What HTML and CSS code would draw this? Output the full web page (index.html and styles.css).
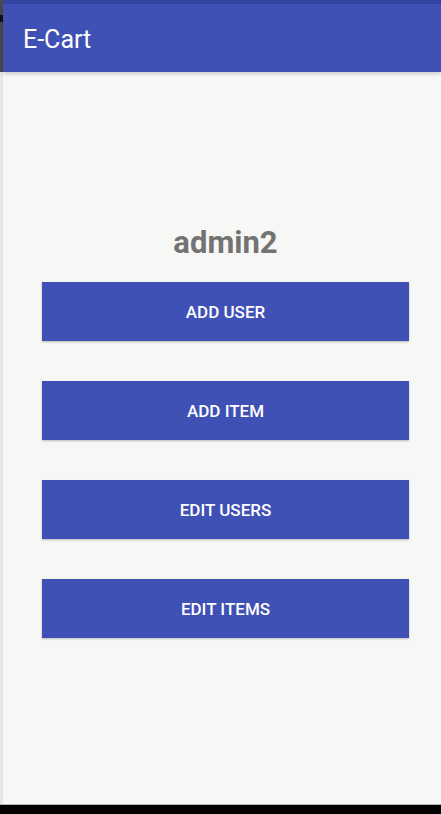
FILE: index.html
```html
<!DOCTYPE html>
<html>
<head>
<meta charset="utf-8">
<link rel="stylesheet" href="styles.css">
</head>
<body>
<div class="frame">
  <div class="edge">
    <div class="edge-top"><span class="edge-mark"></span></div>
    <div class="edge-bottom"></div>
  </div>
  <div class="main">
    <div class="status"></div>
    <header class="appbar"><span class="title">E-Cart</span></header>
    <section class="content">
      <h1 class="user">admin2</h1>
      <div class="buttons">
        <button class="btn">ADD USER</button>
        <button class="btn">ADD ITEM</button>
        <button class="btn">EDIT USERS</button>
        <button class="btn">EDIT ITEMS</button>
      </div>
    </section>
  </div>
</div>
<div class="navbar"></div>
</body>
</html>
```

FILE: styles.css
```css
html, body {
  margin: 0;
  padding: 0;
}
body {
  width: 441px;
  height: 814px;
  overflow: hidden;
  background: #f7f8f6;
  font-family: Roboto, "Liberation Sans", sans-serif;
  display: flex;
  flex-direction: column;
}
.frame {
  flex: 1;
  display: flex;
  min-height: 0;
}
.edge {
  width: 3px;
  display: flex;
  flex-direction: column;
}
.edge-top {
  height: 72px;
  background: #4a4a4a;
  padding-top: 15px;
  box-sizing: border-box;
}
.edge-mark {
  display: block;
  height: 7px;
  background: #111;
}
.edge-bottom {
  flex: 1;
  background: #e6e6e6;
}
.main {
  flex: 1;
  display: flex;
  flex-direction: column;
}
.status {
  height: 4px;
  background: #3444a3;
}
.appbar {
  height: 68px;
  background: #3f51b5;
  display: flex;
  align-items: center;
  padding-left: 20px;
  box-shadow: 0 2px 4px rgba(0, 0, 0, 0.18);
  position: relative;
  z-index: 1;
}
.title {
  color: #ffffff;
  font-size: 25px;
  font-weight: 400;
  margin-top: 2px;
}
.content {
  flex: 1;
  padding: 0 32px 0 39px;
  display: flex;
  flex-direction: column;
}
.user {
  margin: 154px 0 22px;
  font-size: 31px;
  line-height: 34px;
  font-weight: 700;
  color: #737373;
  text-align: center;
}
.buttons {
  display: flex;
  flex-direction: column;
  gap: 40px;
}
.btn {
  height: 59px;
  border: none;
  background: #3f51b5;
  color: #ffffff;
  font-family: Roboto, "Liberation Sans", sans-serif;
  font-size: 17px;
  font-weight: 500;
  padding: 0;
  box-shadow: 0 1px 2px rgba(0, 0, 0, 0.25);
}
.navbar {
  height: 9px;
  background: #000;
  border-top: 1px solid #b8b8b8;
}
```
